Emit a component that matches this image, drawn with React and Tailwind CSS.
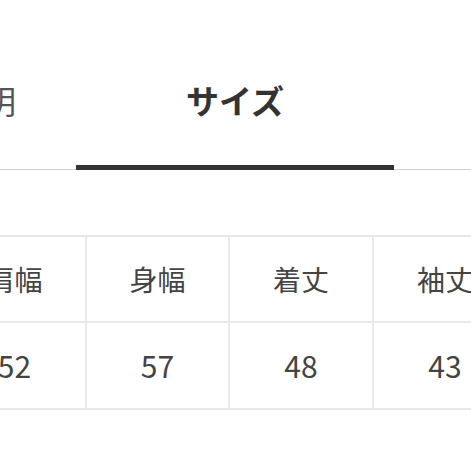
import React from 'react';

const headers = ['肩幅', '身幅', '着丈', '袖丈'];
const values = ['52', '57', '48', '43'];
const widths = ['w-[143px]', 'w-[143px]', 'w-[144px]', 'w-[144px]'];

const App = () => {
  return (
    <div className="w-[471px] h-[471px] overflow-hidden bg-white font-['Noto_Sans_CJK_JP',sans-serif]">
      {/* Tabs */}
      <div className="flex border-b border-[#d2d2d2]">
        <div className="w-[76px] shrink-0 flex justify-end pr-[60px] pt-[76px] pb-[41px] -mb-px border-b-[5px] border-transparent">
          <span className="text-[32px] leading-[48px] text-[#555] whitespace-nowrap">説明</span>
        </div>
        <div className="w-[318px] shrink-0 flex justify-center pt-[76px] pb-[41px] -mb-px border-b-[5px] border-[#333]">
          <span className="text-[33px] leading-[48px] font-bold text-[#333]">サイズ</span>
        </div>
      </div>

      {/* Size table */}
      <div className="mt-[65px] ml-[-56px] flex w-max border-t-2 border-[#e8e8e8]">
        {headers.map((h, i) => (
          <div key={h} className={`${widths[i]} shrink-0 flex flex-col border-r-2 border-[#e8e8e8]`}>
            <div className="h-[86px] flex items-center justify-center border-b-2 border-[#e8e8e8] text-[28px] text-[#444]">
              {h}
            </div>
            <div className="h-[87px] flex items-center justify-center border-b-2 border-[#e8e8e8] text-[30px] text-[#444]">
              {values[i]}
            </div>
          </div>
        ))}
      </div>
    </div>
  );
};

export default App;
